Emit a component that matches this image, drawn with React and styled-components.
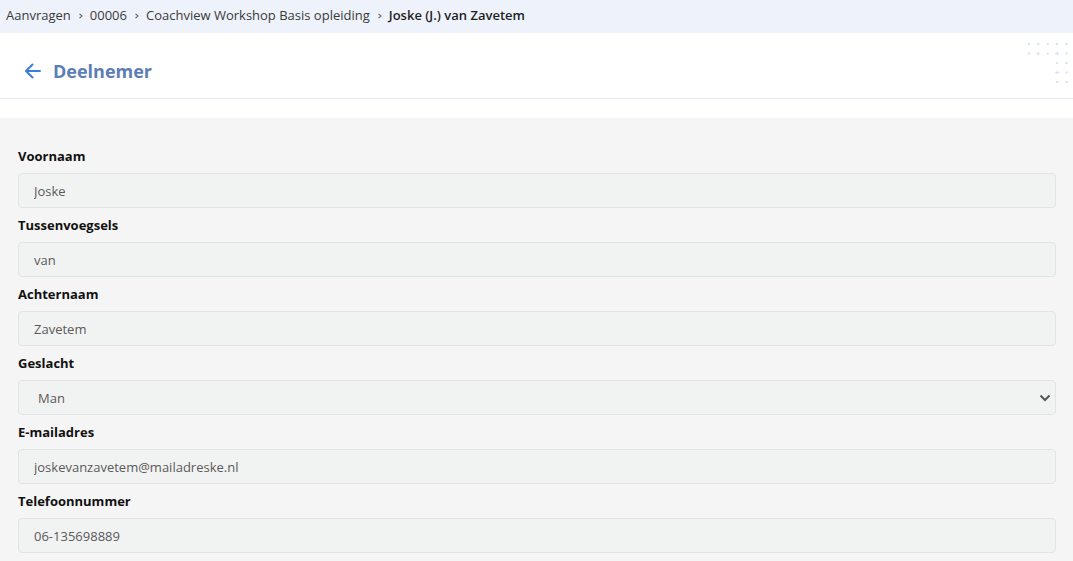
import styled, { createGlobalStyle } from "styled-components";

const GlobalStyle = createGlobalStyle`
  body {
    margin: 0;
    background: #ffffff;
    font-family: "Open Sans", "Liberation Sans", sans-serif;
  }
`;

// --- Breadcrumb ---

const Crumbs = styled.nav`
  display: flex;
  align-items: center;
  box-sizing: border-box;
  height: 33px;
  padding: 0 0 3px 6px;
  background-color: #eef2fa;
  font-size: 13px;
  color: #333333;
`;

const Crumb = styled.span`
  font-weight: ${(p) => (p.$current ? 600 : 400)};
  color: ${(p) => (p.$current ? "#1f1f1f" : "#3a3a3a")};
`;

const Sep = styled.span`
  display: inline-flex;
  margin: 0 6px 0 7px;
  color: #666;
`;

// --- Header ---

const Header = styled.header`
  position: relative;
  display: flex;
  align-items: center;
  box-sizing: border-box;
  height: 66px;
  padding: 11px 0 0 24px;
  border-bottom: 1px solid #e4eaf1;
`;

const BackButton = styled.button`
  display: flex;
  align-items: center;
  padding: 0;
  margin-right: 11px;
  border: none;
  background: none;
  color: #3b7ddd;
  cursor: pointer;
`;

const Title = styled.h1`
  margin: 0;
  font-size: 18px;
  font-weight: 700;
  color: #5c7eb3;
`;

const Dots = styled.svg`
  position: absolute;
  right: 0;
  top: 8px;
`;

const Spacer = styled.div`
  height: 19px;
`;

// --- Form ---

const FormArea = styled.section`
  min-height: 500px;
  padding: 29px 17px 0 18px;
  background-color: #f5f5f5;
`;

const Field = styled.div`
  display: flex;
  flex-direction: column;
  gap: 8px;
  margin-bottom: 8px;
`;

const Label = styled.label`
  font-size: 13px;
  font-weight: 700;
  line-height: 18px;
  color: #111;
`;

const Input = styled.input`
  box-sizing: border-box;
  height: 35px;
  width: 100%;
  padding: 0 15px;
  border: 1px solid #e2e3e3;
  border-radius: 4px;
  background-color: #f1f2f2;
  font-family: inherit;
  font-size: 13px;
  color: #5a5a5a;
  outline: none;
`;

const SelectWrap = styled.div`
  position: relative;
`;

const Select = styled.select`
  box-sizing: border-box;
  height: 35px;
  width: 100%;
  padding: 0 19px;
  border: 1px solid #e2e3e3;
  border-radius: 4px;
  background-color: #f1f2f2;
  font-family: inherit;
  font-size: 13px;
  color: #5a5a5a;
  appearance: none;
  outline: none;
`;

const Caret = styled.svg`
  position: absolute;
  right: 4px;
  top: 13px;
  pointer-events: none;
`;

const Chevron = () => (
  <svg width="6" height="8" viewBox="0 0 6 8">
    <path d="M1.5 1.8 L4 4 L1.5 6.2" fill="none" stroke="#666" strokeWidth="1.1" />
  </svg>
);

const dots = [
  [0, 0, "s"], [1, 0, "s"], [2, 0, "s"], [3, 0, "s"], [4, 0, "s"],
  [0, 1, "s"], [1, 1, "p"], [2, 1, "s"], [3, 1, "p"], [4, 1, "s"],
  [3, 2, "s"], [4, 2, "s"],
  [3, 3, "p"], [4, 3, "s"],
  [3, 4, "s"], [4, 4, "s"],
];

const DotPattern = () => (
  <Dots width="46" height="50" viewBox="0 0 46 50">
    {dots.map(([c, r, t]) => {
      const x = 2 + c * 9.4;
      const y = 3 + r * 9.5;
      return t === "p" ? (
        <g key={`${c}-${r}`} stroke="#d6e1f3" strokeWidth="1">
          <line x1={x - 2} y1={y} x2={x + 2} y2={y} />
          <line x1={x} y1={y - 2} x2={x} y2={y + 2} />
        </g>
      ) : (
        <rect key={`${c}-${r}`} x={x - 1} y={y - 1} width="2" height="2" fill="#d6e1f3" />
      );
    })}
  </Dots>
);

const fields = [
  { label: "Voornaam", value: "Joske" },
  { label: "Tussenvoegsels", value: "van" },
  { label: "Achternaam", value: "Zavetem" },
  { label: "Geslacht", value: "Man", select: true },
  { label: "E-mailadres", value: "joskevanzavetem@mailadreske.nl" },
  { label: "Telefoonnummer", value: "06-135698889" },
];

const crumbs = ["Aanvragen", "00006", "Coachview Workshop Basis opleiding"];

export default function App() {
  return (
    <>
      <GlobalStyle />
      <Crumbs>
        {crumbs.map((c) => (
          <span key={c}>
            <Crumb>{c}</Crumb>
            <Sep>
              <Chevron />
            </Sep>
          </span>
        ))}
        <Crumb $current>Joske (J.) van Zavetem</Crumb>
      </Crumbs>

      <Header>
        <BackButton aria-label="Terug">
          <svg width="18" height="18" viewBox="0 0 18 18">
            <path
              d="M16 9 H2.5 M8.5 2.5 L2 9 L8.5 15.5"
              fill="none"
              stroke="currentColor"
              strokeWidth="2"
              strokeLinecap="round"
              strokeLinejoin="round"
            />
          </svg>
        </BackButton>
        <Title>Deelnemer</Title>
        <DotPattern />
      </Header>
      <Spacer />

      <FormArea>
        {fields.map((f) => (
          <Field key={f.label}>
            <Label>{f.label}</Label>
            {f.select ? (
              <SelectWrap>
                <Select defaultValue={f.value}>
                  <option>Man</option>
                  <option>Vrouw</option>
                </Select>
                <Caret width="14" height="10" viewBox="0 0 14 10">
                  <path d="M2.5 2.5 L7 7 L11.5 2.5" fill="none" stroke="#555" strokeWidth="2" />
                </Caret>
              </SelectWrap>
            ) : (
              <Input defaultValue={f.value} readOnly />
            )}
          </Field>
        ))}
      </FormArea>
    </>
  );
}
